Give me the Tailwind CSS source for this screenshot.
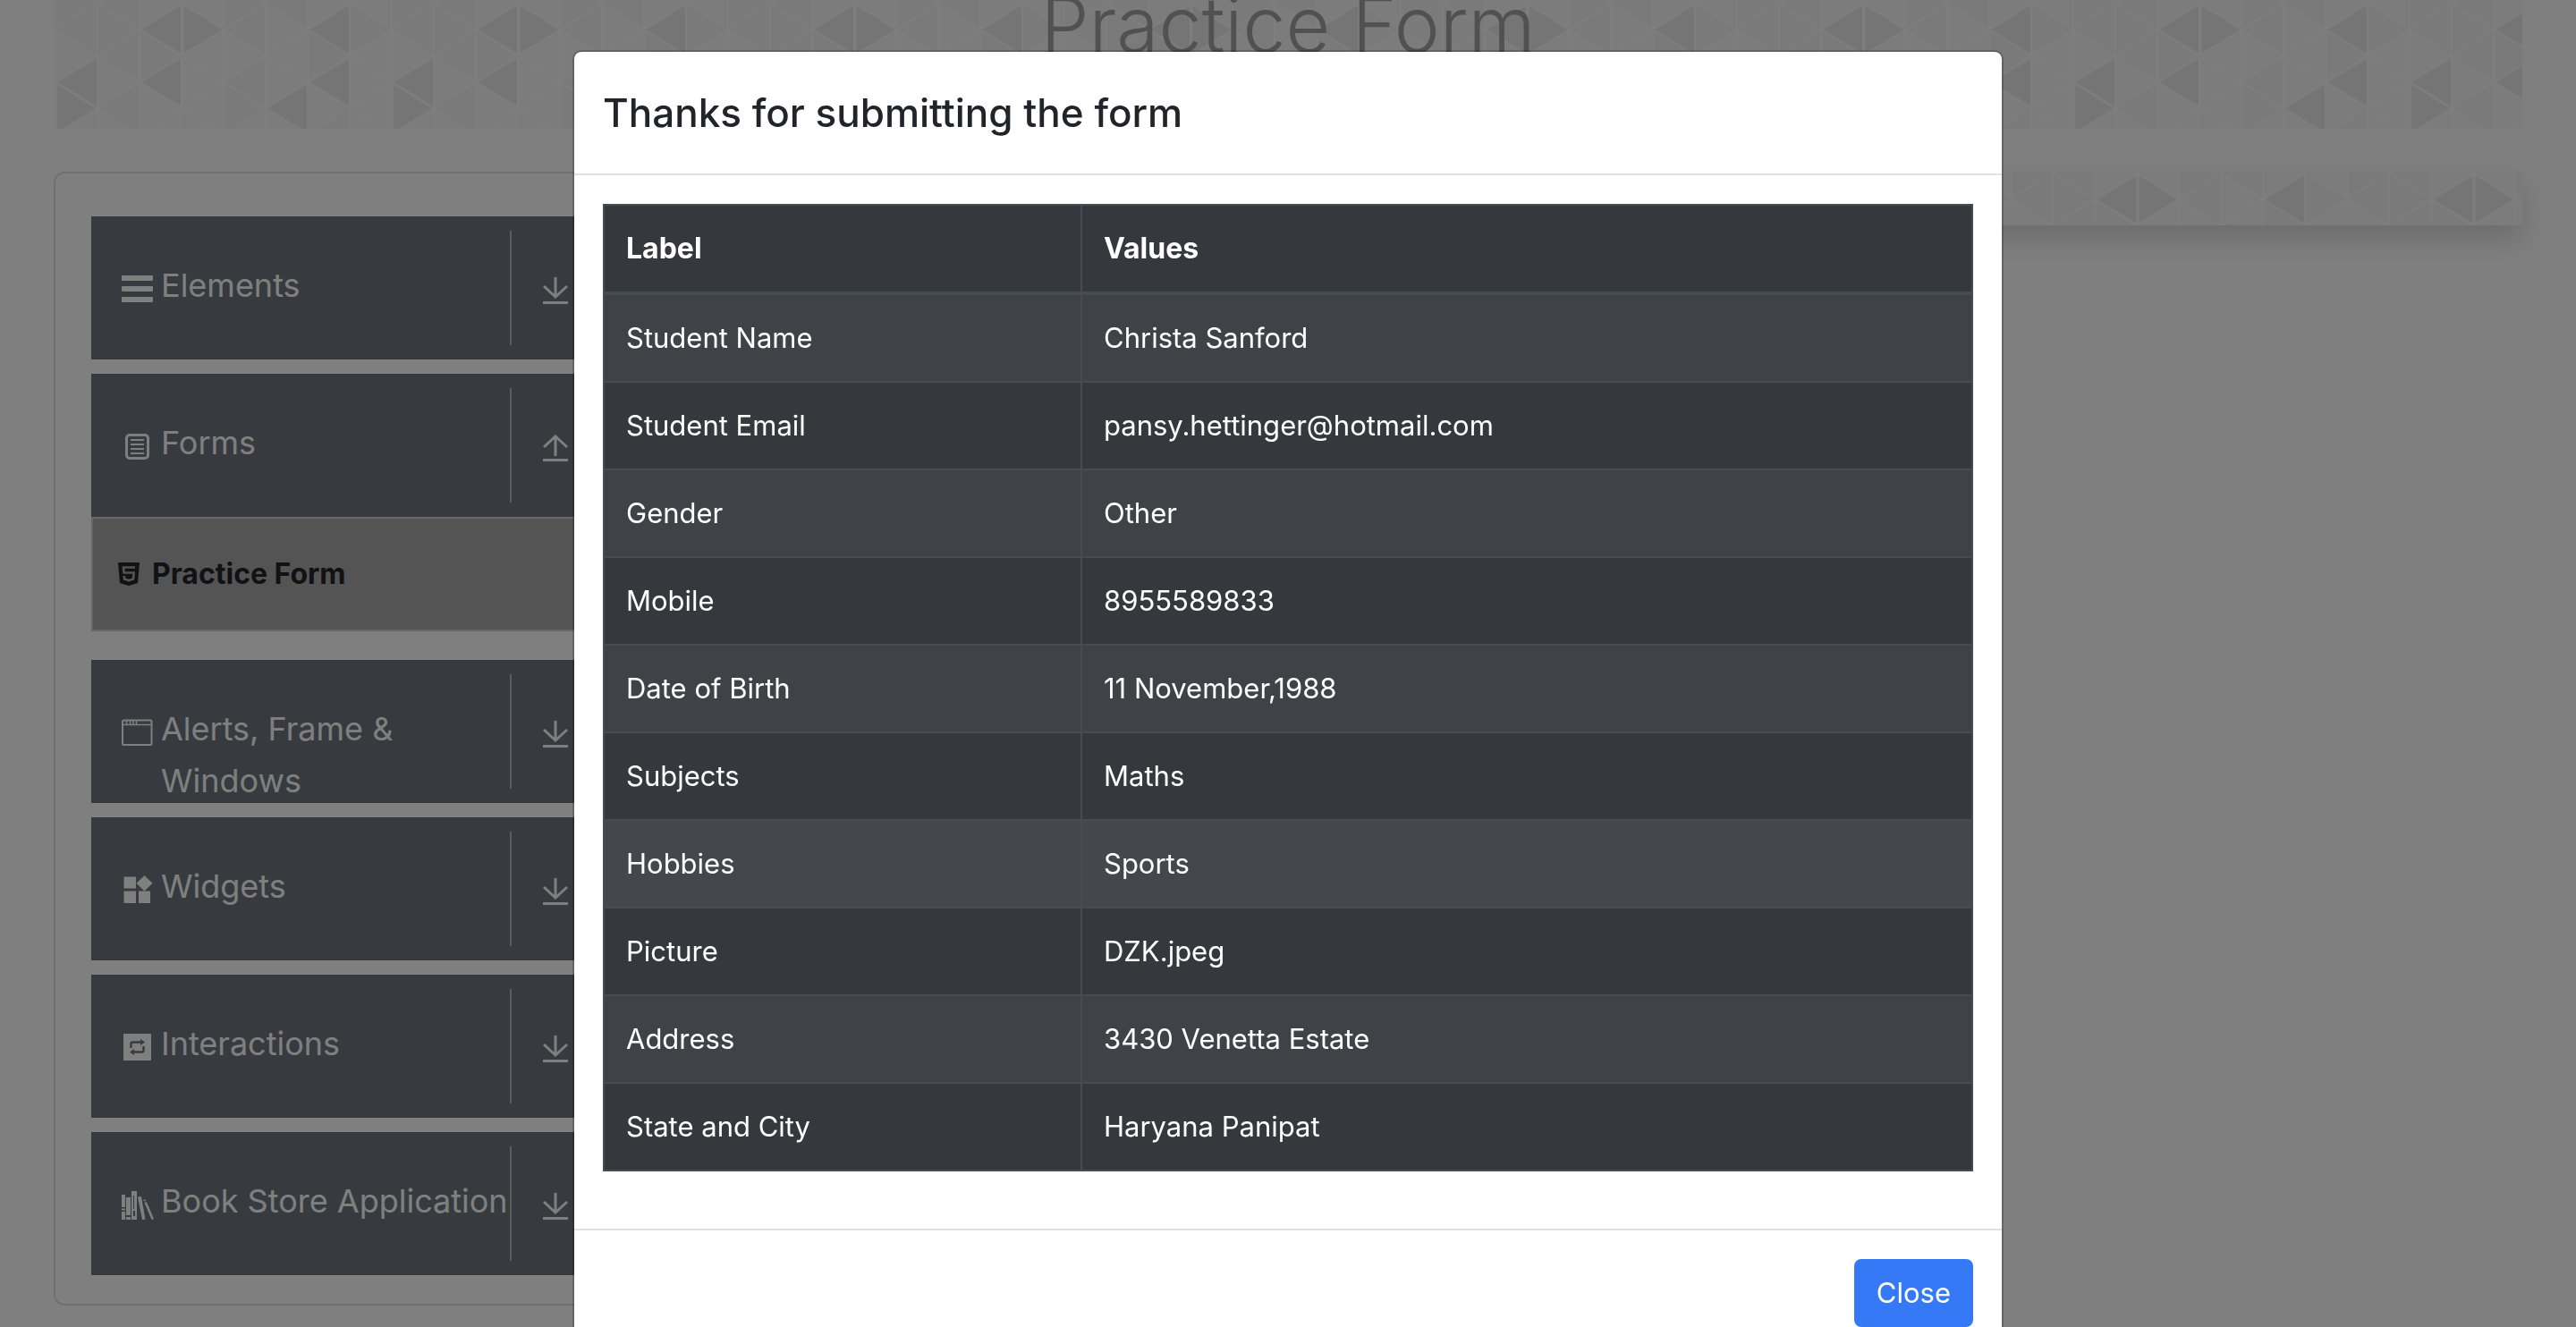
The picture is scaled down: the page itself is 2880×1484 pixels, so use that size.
<!DOCTYPE html>
<html lang="en">
<head>
<meta charset="utf-8">
<title>Practice Form</title>
<script src="https://cdn.jsdelivr.net/npm/@tailwindcss/browser@4"></script>
</head>
<body class="h-screen overflow-hidden bg-white font-['Inter',sans-serif] text-[#212529]">

<!-- Shared symbols -->
<svg class="absolute size-0" aria-hidden="true">
  <defs>
    <pattern id="triangles" width="376" height="236" patternUnits="userSpaceOnUse">
      <rect width="376" height="236" fill="#f8f8f8"/>
      <g fill="#f4f4f4">
        <path d="M2-26L49 3L2 33zM49 3V62L2 33zM49 3L96 33L49 62zM96-26V33L49 3zM96 33V92L49 62zM190 33L237 3V62zM190-26L237 3L190 33zM284-26V33L237 3zM331 3V62L284 33zM331 3L376 33L331 62zM284 33L331 62L284 92zM237 62V121L190 92zM96 33L143 62L96 92zM2 92L49 62V121zM96 92V151L49 121zM190 92L237 121L190 151zM284 92V151L237 121zM331 121V180L284 151z"/>
      </g>
      <g fill="#ebebeb">
        <path d="M99 33L142 7V59zM146 7L189 33L146 59zM287 33L330 7V59zM5 92L48 66V118zM99 92L142 66V118zM287 92L330 66V118zM4 95L47 121L4 147zM240 121L283 95V147z"/>
      </g>
      <g stroke="#fcfcfc" stroke-width="2" fill="none">
        <path d="M2 0V236M49 0V236M96 0V236M143 0V236M190 0V236M237 0V236M284 0V236M331 0V236"/>
        <path d="M-45 3L2-26L378 210M-45 62L2 33L331 239M2 92L237 239M2 151L143 239M96-26L378 151M190-26L378 92M284-26L378 33"/>
        <path d="M2 33L96-26M2 92L190-26M2 151L284-26M2 210L378-26M49 239L378 33M143 239L378 92M237 239L378 151"/>
      </g>
    </pattern>
    <symbol id="arrow-down" viewBox="0 0 32 32">
      <path d="M17 0V22M4 10L17 22L30 10" fill="none" stroke="currentColor" stroke-width="3"/>
      <path d="M3 27H31V30H3z" fill="currentColor"/>
    </symbol>
    <symbol id="arrow-up" viewBox="0 0 32 32">
      <path d="M17 24V2M4 14L17 2L30 14" fill="none" stroke="currentColor" stroke-width="3"/>
      <path d="M3 27H31V30H3z" fill="currentColor"/>
    </symbol>
  </defs>
</svg>

<div class="-mt-[26px] px-[60px]">
  <header class="relative h-[170px] overflow-hidden">
    <svg class="absolute inset-x-0 top-[26px] h-36 w-full" aria-hidden="true"><rect width="100%" height="100%" fill="url(#triangles)"/></svg>
    <h1 class="relative text-center text-[86px] leading-[108px] font-light text-[#a2a2a2]">Practice Form</h1>
  </header>

  <div class="mt-12 flex items-start gap-[30px]">
    <nav class="w-[652px] shrink-0 rounded-[12px] border-2 border-[#dfdfdf] px-10 pt-12 pb-8 text-[36px] leading-[58px] text-white">
      <div class="flex flex-col gap-4">
        <button type="button" class="flex h-40 items-start bg-[#6f757d] pl-8 text-left">
          <svg class="mt-16 size-10 shrink-0" viewBox="0 0 40 40" fill="currentColor" aria-hidden="true"><rect x="2" y="2" width="35" height="6" rx="1"/><rect x="2" y="14" width="35" height="6" rx="1"/><rect x="2" y="26" width="35" height="6" rx="1"/></svg>
          <span class="ml-1.5 mt-12 w-[390px] shrink-0">Elements</span>
          <span class="my-4 w-0.5 shrink-0 self-stretch bg-[#b8b8b8]"></span>
          <svg class="ml-8 mt-[68px] size-8 shrink-0" aria-hidden="true"><use href="#arrow-down"/></svg>
        </button>

        <div class="mb-4">
          <button type="button" class="flex h-40 w-full items-start bg-[#6f757d] pl-8 text-left">
            <svg class="mt-16 size-10 shrink-0" viewBox="0 0 40 40" fill="none" stroke="currentColor" aria-hidden="true"><rect x="7.500" y="4.500" width="24" height="26" rx="3.500" stroke-width="3"/><path d="M12 10H27M12 15H27M12 20H27M12 25H27" stroke-width="2"/></svg>
            <span class="ml-1.5 mt-12 w-[390px] shrink-0">Forms</span>
            <span class="my-4 w-0.5 shrink-0 self-stretch bg-[#b8b8b8]"></span>
            <svg class="ml-8 mt-[68px] size-8 shrink-0" aria-hidden="true"><use href="#arrow-up"/></svg>
          </button>
          <a href="#" class="flex h-32 items-center gap-[14px] border-2 border-[#ceced6] bg-[#a8a8a8] pl-7 text-[32px] leading-[48px] font-bold text-[#212529]">
            <svg class="h-[26px] w-6" viewBox="0 0 24 26" aria-hidden="true"><path d="M0 0H24L22 23L12 26L2 23z" fill="#212529"/><path d="M19 5.500H6L6.600 11.500H17.600L17 18.500L12 20.200L7 18.500L6.800 15" fill="none" stroke="#a8a8a8" stroke-width="2.600"/></svg>
            <span>Practice Form</span>
          </a>
        </div>

        <button type="button" class="flex h-40 items-start bg-[#6f757d] pl-8 text-left">
          <svg class="mt-16 size-10 shrink-0" viewBox="0 0 40 40" fill="none" stroke="currentColor" aria-hidden="true"><rect x="3" y="3.500" width="32.500" height="27.500" rx="1.500" stroke-width="2"/><path d="M3 8.500H35.500M7.500 4V8M11.500 4V8M15 4V8M18.500 4V8" stroke-width="1.500"/></svg>
          <span class="ml-1.5 mt-12 w-[390px] shrink-0">Alerts, Frame &amp; Windows</span>
          <span class="my-4 w-0.5 shrink-0 self-stretch bg-[#b8b8b8]"></span>
          <svg class="ml-8 mt-[68px] size-8 shrink-0" aria-hidden="true"><use href="#arrow-down"/></svg>
        </button>

        <button type="button" class="flex h-40 items-start bg-[#6f757d] pl-8 text-left">
          <svg class="mt-16 size-10 shrink-0" viewBox="0 0 40 40" fill="currentColor" aria-hidden="true"><path d="M4.500 2.500H18V15.500H4.500zM4.500 18.500H18V32H4.500zM21 18.500H34V32H21zM27.500 1L36.500 9.800L27.500 18.500L18.500 9.800z"/></svg>
          <span class="ml-1.5 mt-12 w-[390px] shrink-0">Widgets</span>
          <span class="my-4 w-0.5 shrink-0 self-stretch bg-[#b8b8b8]"></span>
          <svg class="ml-8 mt-[68px] size-8 shrink-0" aria-hidden="true"><use href="#arrow-down"/></svg>
        </button>

        <button type="button" class="flex h-40 items-start bg-[#6f757d] pl-8 text-left">
          <svg class="mt-16 size-10 shrink-0" viewBox="0 0 40 40" aria-hidden="true"><rect x="4" y="2" width="31" height="30" rx="1" fill="currentColor"/><path d="M12.500 18V13.500Q12.500 11.500 14.500 11.500H24M26.500 16V20.500Q26.500 22.500 24.500 22.500H15" fill="none" stroke="#6f757d" stroke-width="2.400"/><path d="M23 8L28 11.500L23 15zM16 19L11 22.500L16 26z" fill="#6f757d"/></svg>
          <span class="ml-1.5 mt-12 w-[390px] shrink-0">Interactions</span>
          <span class="my-4 w-0.5 shrink-0 self-stretch bg-[#b8b8b8]"></span>
          <svg class="ml-8 mt-[68px] size-8 shrink-0" aria-hidden="true"><use href="#arrow-down"/></svg>
        </button>

        <button type="button" class="flex h-40 items-start bg-[#6f757d] pl-8 text-left">
          <svg class="mt-16 size-10 shrink-0" viewBox="0 0 40 40" fill="currentColor" aria-hidden="true"><path d="M2 6H6V20H2zM2 21.500H6V23.500H2zM2 25H6V34H2zM7 9H12V29H7zM7 31H12V34H7zM20 8.500L24 8L28.500 33.500L25 34zM26.500 12L28.500 11L29 12.500L27 13.500zM27.500 15L29.800 14L38 33L35.500 34z"/><path d="M13 2H19V34H13zM15 7V22H16V7zM15 24V30H17V24z" fill-rule="evenodd"/></svg>
          <span class="ml-1.5 mt-12 w-[390px] shrink-0">Book Store Application</span>
          <span class="my-4 w-0.5 shrink-0 self-stretch bg-[#b8b8b8]"></span>
          <svg class="ml-8 mt-[68px] size-8 shrink-0" aria-hidden="true"><use href="#arrow-down"/></svg>
        </button>
      </div>
    </nav>

    <div class="min-w-0 flex-1 shadow-[0_16px_32px_rgba(0,0,0,0.15)]">
      <svg class="block h-[60px] w-full" viewBox="0 2 2078 60" preserveAspectRatio="xMaxYMin slice" aria-hidden="true"><rect width="2078" height="62" fill="url(#triangles)"/></svg>
    </div>
  </div>
</div>

<!-- Modal over the dimmed page -->
<div class="fixed inset-0 overflow-hidden bg-black/50">
  <div role="dialog" aria-modal="true" aria-labelledby="modal-title" class="mx-auto mt-14 w-full max-w-[1600px] rounded-[10px] border-2 border-black/20 bg-white bg-clip-padding">
    <div class="border-b-2 border-[#dee2e6] p-8">
      <h2 id="modal-title" class="text-[44px] leading-[72px] font-medium">Thanks for submitting the form</h2>
    </div>
    <div class="p-8">
      <table class="mb-8 w-full table-fixed border-collapse bg-[#35393d] text-left text-[31px] leading-[48px] text-white [&_td]:border-2 [&_td]:border-[#474c54] [&_td]:p-6 [&_th]:border-2 [&_th]:border-b-4 [&_th]:border-[#474c54] [&_th]:p-6">
        <thead>
          <tr class="text-[32px]"><th class="w-[534px] font-bold">Label</th><th class="font-bold">Values</th></tr>
        </thead>
        <tbody>
          <tr class="bg-white/5"><td>Student Name</td><td>Christa Sanford</td></tr>
          <tr><td>Student Email</td><td>pansy.hettinger@hotmail.com</td></tr>
          <tr class="bg-white/5"><td>Gender</td><td>Other</td></tr>
          <tr><td>Mobile</td><td>8955589833</td></tr>
          <tr class="bg-white/5"><td>Date of Birth</td><td>11 November,1988</td></tr>
          <tr><td>Subjects</td><td>Maths</td></tr>
          <tr class="bg-white/8"><td>Hobbies</td><td>Sports</td></tr>
          <tr><td>Picture</td><td>DZK.jpeg</td></tr>
          <tr class="bg-white/5"><td>Address</td><td>3430 Venetta Estate</td></tr>
          <tr><td>State and City</td><td>Haryana Panipat</td></tr>
        </tbody>
      </table>
    </div>
    <div class="flex justify-end border-t-2 border-[#dee2e6] p-8">
      <button type="button" class="h-[76px] rounded-lg bg-[#3579f6] px-[25px] text-[31px] leading-[48px] text-white">Close</button>
    </div>
  </div>
</div>
</body>
</html>
